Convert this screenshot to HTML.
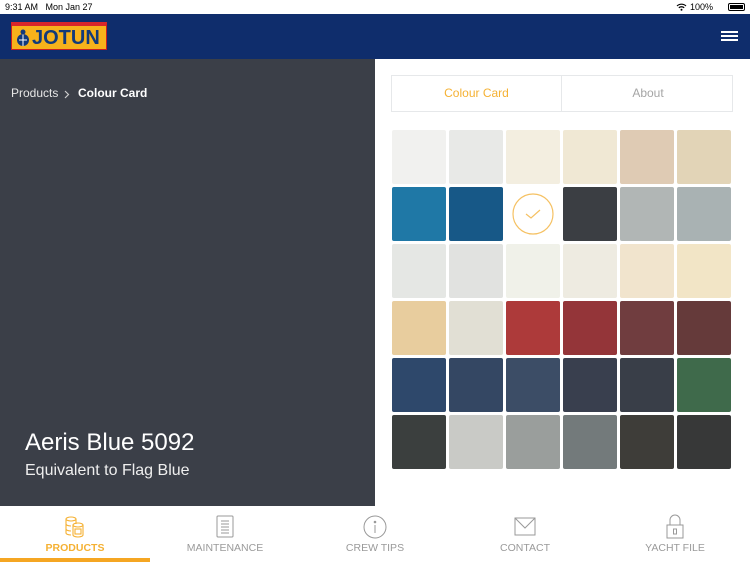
<!DOCTYPE html>
<html><head><meta charset="utf-8"><style>
*{margin:0;padding:0;box-sizing:border-box}
body{width:750px;height:562px;overflow:hidden;background:#fff;font-family:"Liberation Sans",sans-serif;position:relative}
.status{position:absolute;top:0;left:0;width:750px;height:14px;background:#fff;font-size:9px;color:#000}
.nav{position:absolute;top:14px;left:0;width:750px;height:45px;background:#0f2d6c}
.left{position:absolute;top:59px;left:0;width:375px;height:447px;background:#3b3f48}
.right{position:absolute;top:59px;left:375px;width:375px;height:447px;background:#fff}
.sw{position:absolute;width:54px;height:54px;border-radius:2px}
.tabs{position:absolute;top:506px;left:0;width:750px;height:56px;background:#fff}
.tab{position:absolute;top:0;width:150px;height:56px;text-align:center}
.tab span{position:absolute;top:36px;left:0;width:150px;font-size:10.5px;color:#9a9a9a}
</style></head><body>
<div class="status">
<span style="position:absolute;left:5px;top:2px">9:31 AM&nbsp;&nbsp;&nbsp;Mon Jan 27</span>
<span style="position:absolute;left:690px;top:2px">100%</span>
<svg style="position:absolute;left:676px;top:3px" width="11" height="8" viewBox="0 0 11 8"><path d="M1 3a6.5 6.5 0 0 1 9 0M2.8 4.8a4 4 0 0 1 5.4 0" stroke="#000" stroke-width="1.2" fill="none"/><circle cx="5.5" cy="6.8" r="1" fill="#000"/></svg>
<div style="position:absolute;left:728px;top:3px;width:17px;height:8px;border:1px solid #000;border-radius:2px;padding:1px"><div style="width:100%;height:100%;background:#000"></div></div>
</div>
<div class="nav">
<div style="position:absolute;left:11px;top:8px;width:96px;height:28px;background:#f7b21b;border:1px solid #c8201f;border-top:4px solid #d8262a">
<svg style="position:absolute;left:3px;top:3px" width="16" height="18" viewBox="0 0 16 18"><circle cx="8" cy="11" r="6" fill="#123a7b"/><path d="M4 11h8M8 5v12" stroke="#fff" stroke-width="1"/><circle cx="8" cy="3" r="2.5" fill="#123a7b"/></svg>
<span style="position:absolute;left:20px;top:1px;font-size:20px;font-weight:bold;color:#123a7b;letter-spacing:0">JOTUN</span>
</div>
<div style="position:absolute;left:721px;top:17px;width:17px;height:2px;background:#fff;box-shadow:0 4px 0 #fff,0 8px 0 #fff"></div>
</div>
<div class="left">
<div style="position:absolute;left:11px;top:27px;font-size:12px;color:#e6e6e6">Products</div>
<svg style="position:absolute;left:64px;top:31px" width="6" height="9" viewBox="0 0 6 9"><path d="M1 1l3.5 3.5L1 8" stroke="#ccc" fill="none" stroke-width="1.2"/></svg>
<div style="position:absolute;left:78px;top:27px;font-size:12px;color:#fff;font-weight:bold">Colour Card</div>
<div style="position:absolute;left:25px;top:370px;font-size:24px;color:#fff">Aeris Blue 5092</div>
<div style="position:absolute;left:25px;top:403px;font-size:16px;color:#eee">Equivalent to Flag Blue</div>
</div>
<div class="right">
<div style="position:absolute;left:16px;top:16px;width:342px;height:37px;border:1px solid #e6e8ea">
<div style="position:absolute;left:0;top:0;width:170px;height:35px;border-right:1px solid #e6e8ea;text-align:center;line-height:35px;font-size:12px;color:#f5b133">Colour Card</div>
<div style="position:absolute;left:171px;top:0;width:170px;height:35px;text-align:center;line-height:35px;font-size:12px;color:#a5a5a5">About</div>
</div>
</div>
<div id="g"></div>
<script>
var c=[["#f1f1ef","#e8e9e7","#f3eee0","#f0e8d4","#dfcbb4","#e2d4b7"],
["#1f78a6","#175887","","#3b3e43","#b1b6b5","#a9b2b3"],
["#e5e7e4","#e1e2e0","#f0f1e9","#eeebe1","#f1e4cd","#f2e5c6"],
["#e8cd9e","#e1dfd4","#ad3a3a","#943539","#703d3f","#653a3a"],
["#2e486b","#344763","#3c4d66","#393f4e","#393e48","#3f6a4b"],
["#3b3f3e","#c9cac6","#9a9e9c","#737a7b","#3e3d39","#373838"]];
var h="";for(var r=0;r<6;r++)for(var k=0;k<6;k++){var x=392+k*56.9,y=130+r*56.9;
if(c[r][k])h+='<div class="sw" style="left:'+x+'px;top:'+y+'px;background:'+c[r][k]+'"></div>';
else h+='<svg class="sw" style="left:'+x+'px;top:'+y+'px" viewBox="0 0 54 54"><circle cx="27" cy="27" r="20" fill="none" stroke="#f5c163" stroke-width="1.2"/><path d="M20 27l5 4 9-8" fill="none" stroke="#f5c163" stroke-width="1.2"/></svg>';}
document.getElementById("g").innerHTML=h;
</script>
<div class="tabs">
<div class="tab" style="left:0"><svg style="position:absolute;left:63px;top:9px" width="24" height="24" viewBox="0 0 24 24" fill="none" stroke="#f5b133" stroke-width="1.1"><ellipse cx="8" cy="4" rx="5" ry="2"/><path d="M3 4v14c0 1 2 2 5 2M13 4v5"/><path d="M3 9c0 1 2 2 5 2M3 14c0 1 2 2 5 2"/><ellipse cx="15" cy="10" rx="5" ry="2"/><path d="M10 10v10c0 1 2 2 5 2s5-1 5-2V10"/><rect x="12" y="14" width="6" height="5"/></svg><span style="color:#f5b133;font-weight:bold">PRODUCTS</span></div>
<div style="position:absolute;left:0;top:52px;width:150px;height:4px;background:#f5a623"></div>
<div class="tab" style="left:150px"><svg style="position:absolute;left:66px;top:9px" width="18" height="23" viewBox="0 0 18 23" fill="none" stroke="#999" stroke-width="1"><rect x="1" y="1" width="16" height="21" rx="1"/><path d="M5 6h8M5 9h8M5 12h8M5 15h8M5 18h8"/></svg><span>MAINTENANCE</span></div>
<div class="tab" style="left:300px"><svg style="position:absolute;left:63px;top:9px" width="24" height="24" viewBox="0 0 24 24" fill="none" stroke="#999" stroke-width="1"><circle cx="12" cy="12" r="11"/><path d="M12 10v8"/><circle cx="12" cy="7" r=".8" fill="#999"/></svg><span>CREW TIPS</span></div>
<div class="tab" style="left:450px"><svg style="position:absolute;left:64px;top:11px" width="22" height="19" viewBox="0 0 22 19" fill="none" stroke="#999" stroke-width="1"><rect x="1" y="1" width="20" height="17"/><path d="M1 1l10 10L21 1"/></svg><span>CONTACT</span></div>
<div class="tab" style="left:600px"><svg style="position:absolute;left:66px;top:8px" width="18" height="25" viewBox="0 0 18 25" fill="none" stroke="#999" stroke-width="1"><path d="M4 11V6a5 5 0 0 1 10 0v5"/><rect x="1" y="11" width="16" height="13"/><rect x="7.5" y="15" width="3" height="5"/></svg><span>YACHT FILE</span></div>
</div>
</body></html>
